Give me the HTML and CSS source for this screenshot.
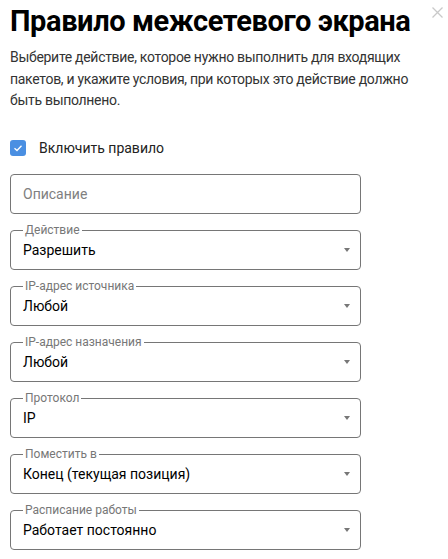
FILE: index.html
```html
<!DOCTYPE html>
<html lang="ru">
<head>
<meta charset="utf-8">
<link rel="stylesheet" href="styles.css">
</head>
<body>
<div class="dialog">
  <div class="header">
    <h1 class="title">Правило межсетевого экрана</h1>
    <button class="close" aria-label="Закрыть">
      <svg width="11" height="11" viewBox="0 0 11 11"><path d="M0.5 0.5L10.5 10.5M10.5 0.5L0.5 10.5" stroke="#c9c9c9" stroke-width="1.3" fill="none"/></svg>
    </button>
  </div>
  <p class="lead">Выберите действие, которое нужно выполнить для входящих пакетов, и укажите условия, при которых это действие должно быть выполнено.</p>
  <label class="check-row">
    <span class="checkbox">
      <svg width="16" height="16" viewBox="0 0 16 16"><path d="M4.5 8.2L7 10.5L11.5 5.8" stroke="#ffffff" stroke-width="1.3" fill="none"/></svg>
    </span>
    <span class="check-label">Включить правило</span>
  </label>
  <div class="fields">
    <div class="field"><span class="placeholder">Описание</span></div>
    <div class="field select"><span class="field-label">Действие</span><span class="value">Разрешить</span><span class="arrow"></span></div>
    <div class="field select"><span class="field-label">IP-адрес источника</span><span class="value">Любой</span><span class="arrow"></span></div>
    <div class="field select"><span class="field-label">IP-адрес назначения</span><span class="value">Любой</span><span class="arrow"></span></div>
    <div class="field select"><span class="field-label">Протокол</span><span class="value">IP</span><span class="arrow"></span></div>
    <div class="field select"><span class="field-label">Поместить в</span><span class="value">Конец (текущая позиция)</span><span class="arrow"></span></div>
    <div class="field select"><span class="field-label">Расписание работы</span><span class="value">Работает постоянно</span><span class="arrow"></span></div>
  </div>
</div>
</body>
</html>
```
FILE: styles.css
```css
html, body {
  margin: 0;
  padding: 0;
  background: #ffffff;
}
body {
  font-family: Roboto, "Noto Sans", "DejaVu Sans", sans-serif;
  color: #222;
}
.dialog {
  width: 448px;
  box-sizing: border-box;
  padding: 0 10px;
}
.header {
  display: flex;
  justify-content: space-between;
  align-items: flex-start;
}
.title {
  margin: 4px 0 0 0;
  font-size: 29px;
  line-height: 34px;
  font-weight: 700;
  letter-spacing: -0.4px;
  color: #000;
}
.close {
  margin: 7px -5px 0 0;
  padding: 0;
  border: 0;
  background: none;
  width: 11px;
  height: 11px;
  display: flex;
}
.lead {
  margin: 9px 0 0 0;
  font-size: 14px;
  line-height: 21.5px;
  letter-spacing: -0.3px;
  color: #333;
}
.check-row {
  display: flex;
  align-items: center;
  gap: 13px;
  margin-top: 28px;
  height: 16px;
}
.checkbox {
  width: 16px;
  height: 16px;
  border-radius: 3px;
  background: #4a8fe2;
  display: flex;
}
.check-label {
  font-size: 14px;
  color: #222;
}
.fields {
  margin-top: 18px;
  display: flex;
  flex-direction: column;
  gap: 16px;
  width: 351px;
}
.field {
  position: relative;
  height: 40px;
  box-sizing: border-box;
  border: 1px solid #767676;
  border-radius: 4px;
  display: flex;
  align-items: center;
  padding: 0 10px 0 12px;
  font-size: 14px;
}
.placeholder {
  color: #808080;
}
.value {
  flex: 1;
  color: #000;
}
.field-label {
  position: absolute;
  top: -8px;
  left: 12px;
  padding: 0 2px;
  background: #ffffff;
  font-size: 12px;
  line-height: 14px;
  color: #777;
}
.arrow {
  width: 0;
  height: 0;
  border-left: 3.5px solid transparent;
  border-right: 3.5px solid transparent;
  border-top: 4px solid #777;
  margin-top: 1px;
}
```
